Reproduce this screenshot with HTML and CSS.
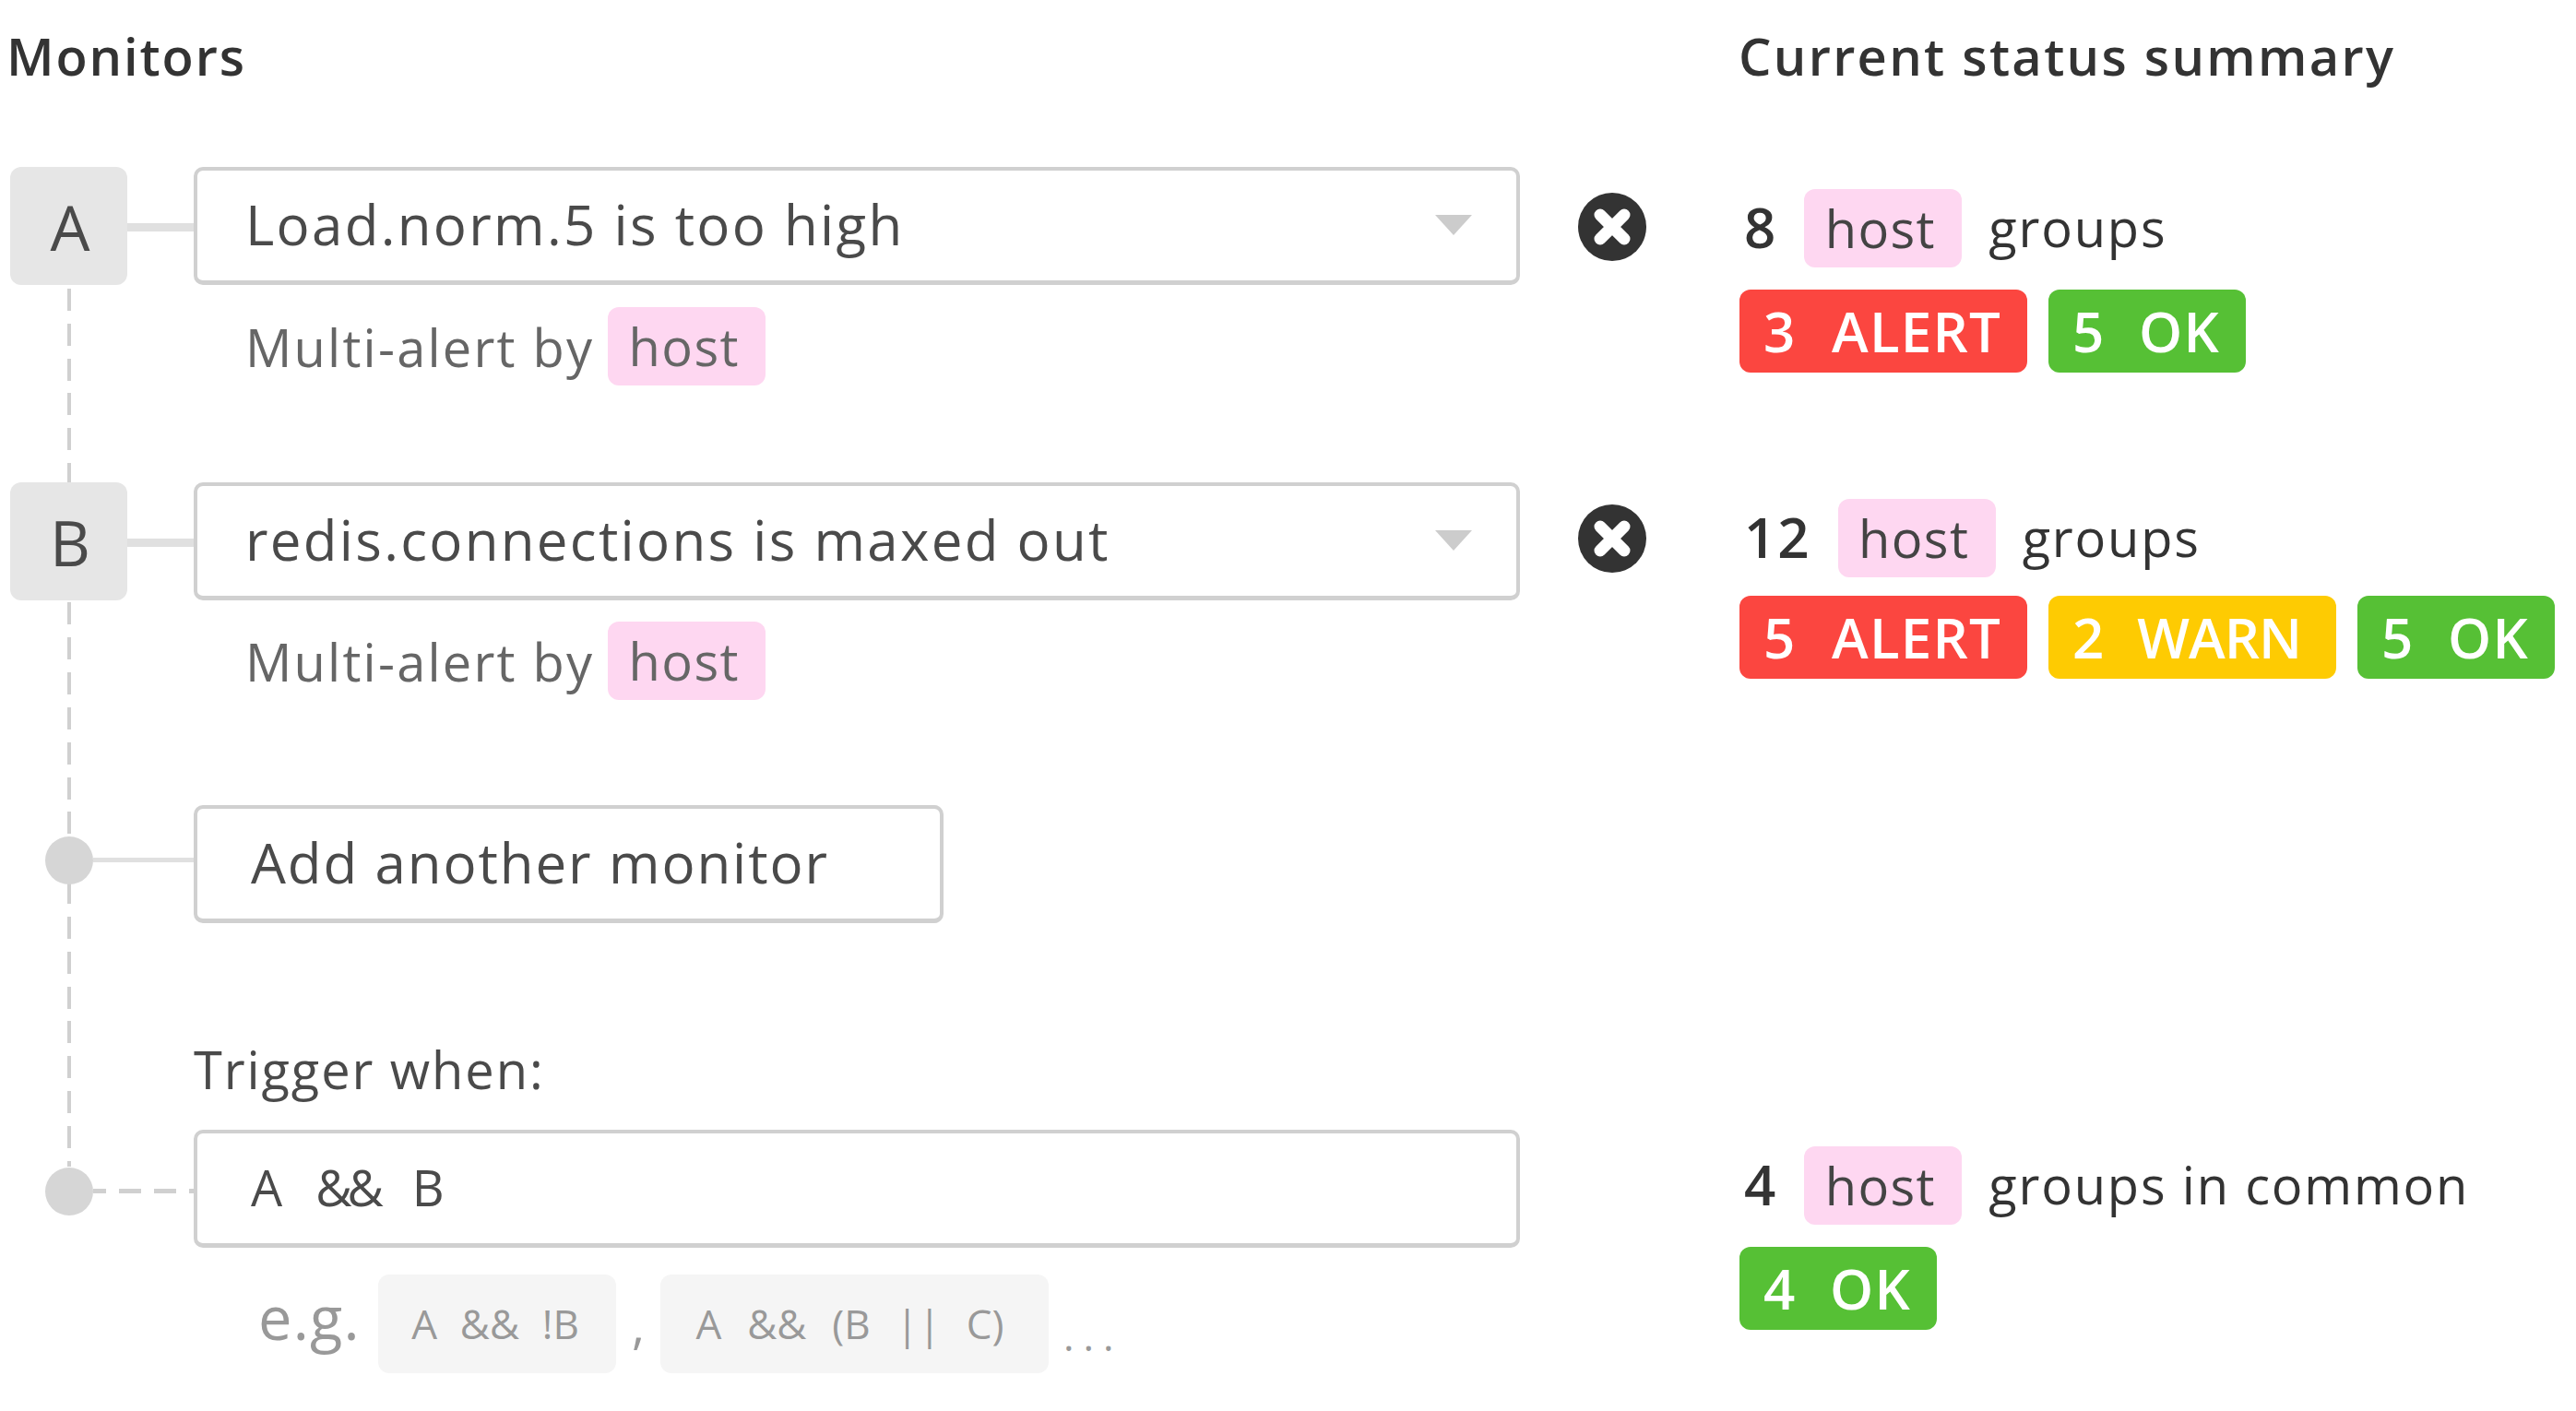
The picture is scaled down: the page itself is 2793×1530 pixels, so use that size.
FILE: index.html
```html
<!DOCTYPE html>
<html lang="en">
<head>
  <meta charset="UTF-8" />
  <title>Monitors</title>
  <link rel="stylesheet" href="styles.css">
</head>
<body>
  <div class="board">
    <!-- tree rail behind the letters -->
    <div class="rail"></div>

    <div class="row row-head">
      <h2 class="title title-left">Monitors</h2>
      <h2 class="title">Current status summary</h2>
    </div>

    <div class="row row-a">
      <div class="side">
        <div class="letter">A</div>
        <div class="link"></div>
      </div>
      <div class="main">
        <div class="field select">
          <span>Load.norm.5 is too high</span>
          <i class="caret"></i>
        </div>
        <p class="multi">Multi-alert by <span class="tag">host</span></p>
      </div>
      <div class="remove">
        <svg width="74" height="74" viewBox="0 0 74 74">
          <circle cx="37" cy="37" r="37" fill="#333"/>
          <path d="M24 24 L50 50 M50 24 L24 50" stroke="#fff" stroke-width="13" stroke-linecap="round"/>
        </svg>
      </div>
      <div class="status">
        <div class="count"><b>8</b><span class="tag">host</span><span>groups</span></div>
        <div class="badges">
          <span class="badge alert"><span>3</span><span>ALERT</span></span>
          <span class="badge ok"><span>5</span><span>OK</span></span>
        </div>
      </div>
    </div>

    <div class="row row-b">
      <div class="side">
        <div class="letter">B</div>
        <div class="link"></div>
      </div>
      <div class="main">
        <div class="field select">
          <span>redis.connections is maxed out</span>
          <i class="caret"></i>
        </div>
        <p class="multi">Multi-alert by <span class="tag">host</span></p>
      </div>
      <div class="remove">
        <svg width="74" height="74" viewBox="0 0 74 74">
          <circle cx="37" cy="37" r="37" fill="#333"/>
          <path d="M24 24 L50 50 M50 24 L24 50" stroke="#fff" stroke-width="13" stroke-linecap="round"/>
        </svg>
      </div>
      <div class="status">
        <div class="count"><b>12</b><span class="tag">host</span><span>groups</span></div>
        <div class="badges">
          <span class="badge alert"><span>5</span><span>ALERT</span></span>
          <span class="badge warn"><span>2</span><span>WARN</span></span>
          <span class="badge ok"><span>5</span><span>OK</span></span>
        </div>
      </div>
    </div>

    <div class="row row-add">
      <div class="side">
        <div class="dot"></div>
        <div class="link thin"></div>
      </div>
      <div class="main">
        <div class="field add">Add another monitor</div>
      </div>
    </div>

    <div class="row row-trigger">
      <div class="side">
        <div class="dot"></div>
        <div class="link dashed"></div>
      </div>
      <div class="main">
        <label class="trigger-label">Trigger when:</label>
        <div class="field expr"><span>A</span><span class="amps">&amp;&amp;</span><span>B</span></div>
        <div class="examples">
          <span class="eg">e.g.</span>
          <code class="example ex-one">A &nbsp;&amp;&amp; &nbsp;!B</code>
          <span class="sep">,</span>
          <code class="example ex-two">A &nbsp;&amp;&amp; &nbsp;(B &nbsp;|| &nbsp;C)</code>
          <span class="sep dots">...</span>
        </div>
      </div>
      <div class="remove"></div>
      <div class="status">
        <div class="count"><b>4</b><span class="tag">host</span><span>groups in common</span></div>
        <div class="badges">
          <span class="badge ok"><span>4</span><span>OK</span></span>
        </div>
      </div>
    </div>
  </div>
</body>
</html>
```

FILE: styles.css
```css
html, body {
  margin: 0;
  background: #fff;
}

body {
  font-family: "Open Sans", "Noto Sans", sans-serif;
  color: #4a4a4a;
  overflow: hidden;
}

.board {
  position: relative;
  width: 2793px;
  height: 1530px;
}

.rail {
  position: absolute;
  left: 73px;
  top: 313px;
  width: 4px;
  height: 952px;
  background: repeating-linear-gradient(to bottom, #d0d0d0 0, #d0d0d0 24px, transparent 24px, transparent 37.83px);
}

.row {
  display: flex;
  align-items: flex-start;
}

.row-head { height: 181px; }
.row-a { height: 342px; }
.row-b { height: 350px; }
.row-add { height: 247px; }

.title {
  margin: 0;
  padding-top: 28px;
  font-size: 56px;
  line-height: 64px;
  font-weight: 600;
  letter-spacing: 2.3px;
  color: #333;
}

.title-left {
  width: 1885px;
  padding-left: 7px;
  box-sizing: border-box;
  letter-spacing: 1.9px;
}

.side {
  position: relative;
  display: flex;
  align-items: center;
  width: 210px;
  height: 128px;
  flex: none;
}

.row-trigger .side {
  margin-top: 105px;
}

.letter {
  position: relative;
  box-sizing: border-box;
  width: 127px;
  height: 128px;
  margin-left: 11px;
  padding-left: 3px;
  background: #e6e6e6;
  border-radius: 12px;
  font-size: 68px;
  line-height: 130px;
  text-align: center;
  flex: none;
}

.link {
  flex: 1;
  height: 9px;
  margin-top: 3px;
  background: #e0e0e0;
}

.link.thin {
  height: 5px;
  margin-top: -10px;
}

.link.dashed {
  height: 5px;
  margin-top: 4px;
  background: repeating-linear-gradient(to right, #d0d0d0 0, #d0d0d0 14px, transparent 14px, transparent 28px, #d0d0d0 28px, #d0d0d0 52px, transparent 52px, transparent 66px, #d0d0d0 66px, #d0d0d0 90px, transparent 90px, transparent 104px);
}

.dot {
  position: relative;
  width: 52px;
  height: 52px;
  margin-left: 49px;
  border-radius: 50%;
  background: #d6d6d6;
  flex: none;
}

.row-add .dot { margin-top: -9px; }
.row-trigger .dot { margin-top: 5px; }

.main {
  width: 1438px;
  flex: none;
}

.field {
  display: flex;
  align-items: center;
  box-sizing: border-box;
  height: 128px;
  border: 4px solid #d0d0d0;
  border-bottom-width: 5px;
  border-radius: 10px;
  background: #fff;
  padding: 0 0 3px 52px;
  font-size: 60px;
  letter-spacing: 2.3px;
  color: #4a4a4a;
}

.select {
  justify-content: space-between;
  padding-right: 48px;
}

.caret {
  width: 0;
  height: 0;
  margin-top: 2px;
  border-left: 20px solid transparent;
  border-right: 20px solid transparent;
  border-top: 22px solid #ccc;
}

.add {
  width: 813px;
  padding-left: 58px;
  letter-spacing: 1.9px;
}

.expr {
  gap: 36px;
  padding: 0 0 4px 58px;
  font-size: 54px;
  letter-spacing: 0;
}

.amps {
  letter-spacing: -5px;
}

.multi {
  display: flex;
  align-items: center;
  gap: 15px;
  margin: 23px 0 0 56px;
  font-size: 56px;
  letter-spacing: 2.2px;
  color: #666;
}

.row-a .multi { margin-top: 24px; }

.tag {
  display: inline-block;
  box-sizing: border-box;
  width: 171px;
  height: 85px;
  line-height: 85px;
  padding-right: 6px;
  text-align: center;
  background: #fed7f1;
  border-radius: 12px;
  font-size: 56px;
  letter-spacing: 1.4px;
}

.trigger-label {
  display: block;
  height: 105px;
  padding-top: 4px;
  box-sizing: border-box;
  font-size: 56px;
  line-height: 70px;
  letter-spacing: 1.9px;
}

.examples {
  display: flex;
  align-items: center;
  margin: 29px 0 0 70px;
  color: #999;
}

.eg {
  width: 130px;
  font-size: 65px;
  flex: none;
  letter-spacing: 1.2px;
  margin-top: -16px;
}

.example {
  display: block;
  box-sizing: border-box;
  height: 107px;
  line-height: 107px;
  padding-right: 4px;
  background: #f5f5f5;
  border-radius: 12px;
  text-align: center;
  font-family: inherit;
  font-size: 44px;
  white-space: nowrap;
  word-spacing: 1px;
  flex: none;
}

.ex-one { width: 258px; }
.ex-two { width: 421px; padding-right: 10px; word-spacing: 2.5px; }

.sep {
  width: 48px;
  text-align: center;
  font-size: 54px;
  flex: none;
}

.dots {
  width: auto;
  margin: 24px 0 0 16px;
  font-size: 44px;
  letter-spacing: 10px;
}

.remove {
  display: flex;
  justify-content: flex-end;
  width: 137px;
  padding-top: 28px;
  margin-right: 101px;
  flex: none;
}

.row-b .remove { padding-top: 24px; }

.status {
  color: #333;
}

.row-a .status { padding-top: 24px; }
.row-b .status { padding-top: 18px; }
.row-trigger .status { padding-top: 123px; }

.count {
  display: flex;
  align-items: center;
  gap: 29px;
  height: 85px;
  font-size: 56px;
  letter-spacing: 1.8px;
  margin-left: 5px;
}

.count > span:last-child {
  margin-top: -3px;
}

.count b {
  font-size: 60px;
  font-weight: 600;
  letter-spacing: 2px;
  margin-top: -3px;
}

.count .tag {
  color: #444;
  letter-spacing: 1.4px;
}

.badges {
  display: flex;
  gap: 23px;
  margin-top: 24px;
}

.row-b .badges { margin-top: 20px; }

.badge {
  display: flex;
  box-sizing: border-box;
  justify-content: space-between;
  align-items: center;
  height: 90px;
  padding: 0 28px 0 26px;
  border-radius: 12px;
  color: #fff;
  font-size: 60px;
  font-weight: 600;
  letter-spacing: 1.2px;
}

.alert { width: 312px; background: #fb4640; }
.warn { width: 312px; padding-right: 38px; background: #fecb02; letter-spacing: -1px; }
.ok { width: 214px; background: #56c035; }
```
